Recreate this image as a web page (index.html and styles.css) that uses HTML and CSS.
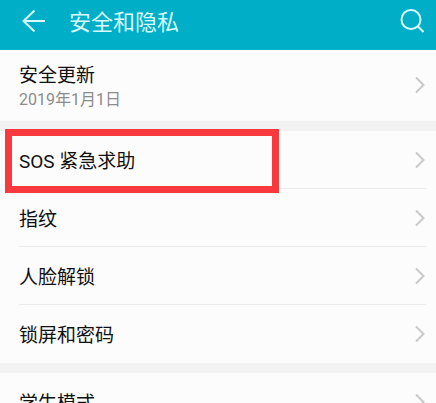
FILE: index.html
```
<!DOCTYPE html>
<html lang="zh-CN">
<head>
    <meta charset="UTF-8">
    <meta name="viewport" content="width=device-width, initial-scale=1.0">
    <title>安全和隐私</title>
    <link rel="stylesheet" href="styles.css">
</head>
<body>
    <header class="topbar">
        <button type="button" class="icon-button" aria-label="返回">
            <svg width="24" height="24" viewBox="0 0 24 24"><path d="M12.5 1.5 L1.5 12 L12.5 22.5 M1.5 12 H23"/></svg>
        </button>
        <h1>安全和隐私</h1>
        <button type="button" class="icon-button" aria-label="搜索">
            <svg width="24" height="24" viewBox="0 0 24 24"><circle cx="11" cy="10.5" r="9.5"/><path d="M17.5 17 L23.5 23"/></svg>
        </button>
    </header>

    <main>
        <section class="group">
            <a href="#update" class="row row-tall">
                <span class="label">安全更新<small>2019年1月1日</small></span>
                <svg class="chevron" width="10" height="18" viewBox="0 0 10 18"><path d="M1 1.5 L8.5 9 L1 16.5"/></svg>
            </a>
        </section>

        <section class="group">
            <a href="#sos" class="row highlighted">
                <span class="label">SOS 紧急求助</span>
                <svg class="chevron" width="10" height="18" viewBox="0 0 10 18"><path d="M1 1.5 L8.5 9 L1 16.5"/></svg>
            </a>
            <a href="#fingerprint" class="row">
                <span class="label">指纹</span>
                <svg class="chevron" width="10" height="18" viewBox="0 0 10 18"><path d="M1 1.5 L8.5 9 L1 16.5"/></svg>
            </a>
            <a href="#face" class="row">
                <span class="label">人脸解锁</span>
                <svg class="chevron" width="10" height="18" viewBox="0 0 10 18"><path d="M1 1.5 L8.5 9 L1 16.5"/></svg>
            </a>
            <a href="#lock" class="row">
                <span class="label">锁屏和密码</span>
                <svg class="chevron" width="10" height="18" viewBox="0 0 10 18"><path d="M1 1.5 L8.5 9 L1 16.5"/></svg>
            </a>
        </section>

        <section class="group">
            <a href="#student" class="row">
                <span class="label">学生模式</span>
                <svg class="chevron" width="10" height="18" viewBox="0 0 10 18"><path d="M1 1.5 L8.5 9 L1 16.5"/></svg>
            </a>
        </section>
    </main>
</body>
</html>
```
FILE: styles.css
```
*, *::after {
    box-sizing: border-box;
}
body {
    margin: 0;
    background-color: #f2f2f2;
    color: #111;
    font-family: Roboto, "Noto Sans CJK SC", sans-serif;
}
body::-webkit-scrollbar {
    display: none;
}
.topbar {
    display: flex;
    align-items: center;
    height: 50px;
    padding: 0 12px 8px 22px;
    background-color: #00aec8;
    color: #d8fbff;
}
.topbar h1 {
    flex: 1;
    margin: 0 0 0 23px;
    padding-top: 3px;
    font-size: 22px;
    font-weight: 400;
    line-height: 32px;
}
.icon-button {
    padding: 0;
    border: none;
    background: none;
    color: inherit;
    cursor: pointer;
}
.icon-button svg {
    display: block;
    fill: none;
    stroke: currentColor;
    stroke-width: 2;
}
main {
    display: flex;
    flex-direction: column;
    gap: 10px;
}
.group {
    background-color: #fcfcfc;
}
.row {
    position: relative;
    display: flex;
    align-items: center;
    justify-content: space-between;
    height: 58px;
    margin: 0 10px 0 19px;
    padding-right: 1px;
    border-bottom: 1px solid #ebebeb;
    color: inherit;
    text-decoration: none;
}
.row:last-child {
    border-bottom-color: transparent;
}
.row-tall {
    height: 71px;
}
.label {
    padding-top: 4px;
    font-size: 19px;
    line-height: 26px;
}
.label small {
    display: block;
    color: #8c8c8c;
    font-size: 16px;
    line-height: 22px;
}
.chevron {
    fill: none;
    stroke: #c9c9c9;
    stroke-width: 2;
}
/* red frame around the option to pick */
.highlighted::after {
    content: "";
    position: absolute;
    top: -2px;
    left: -14px;
    width: 274px;
    height: 64px;
    border: 7px solid #f8393d;
}
```
